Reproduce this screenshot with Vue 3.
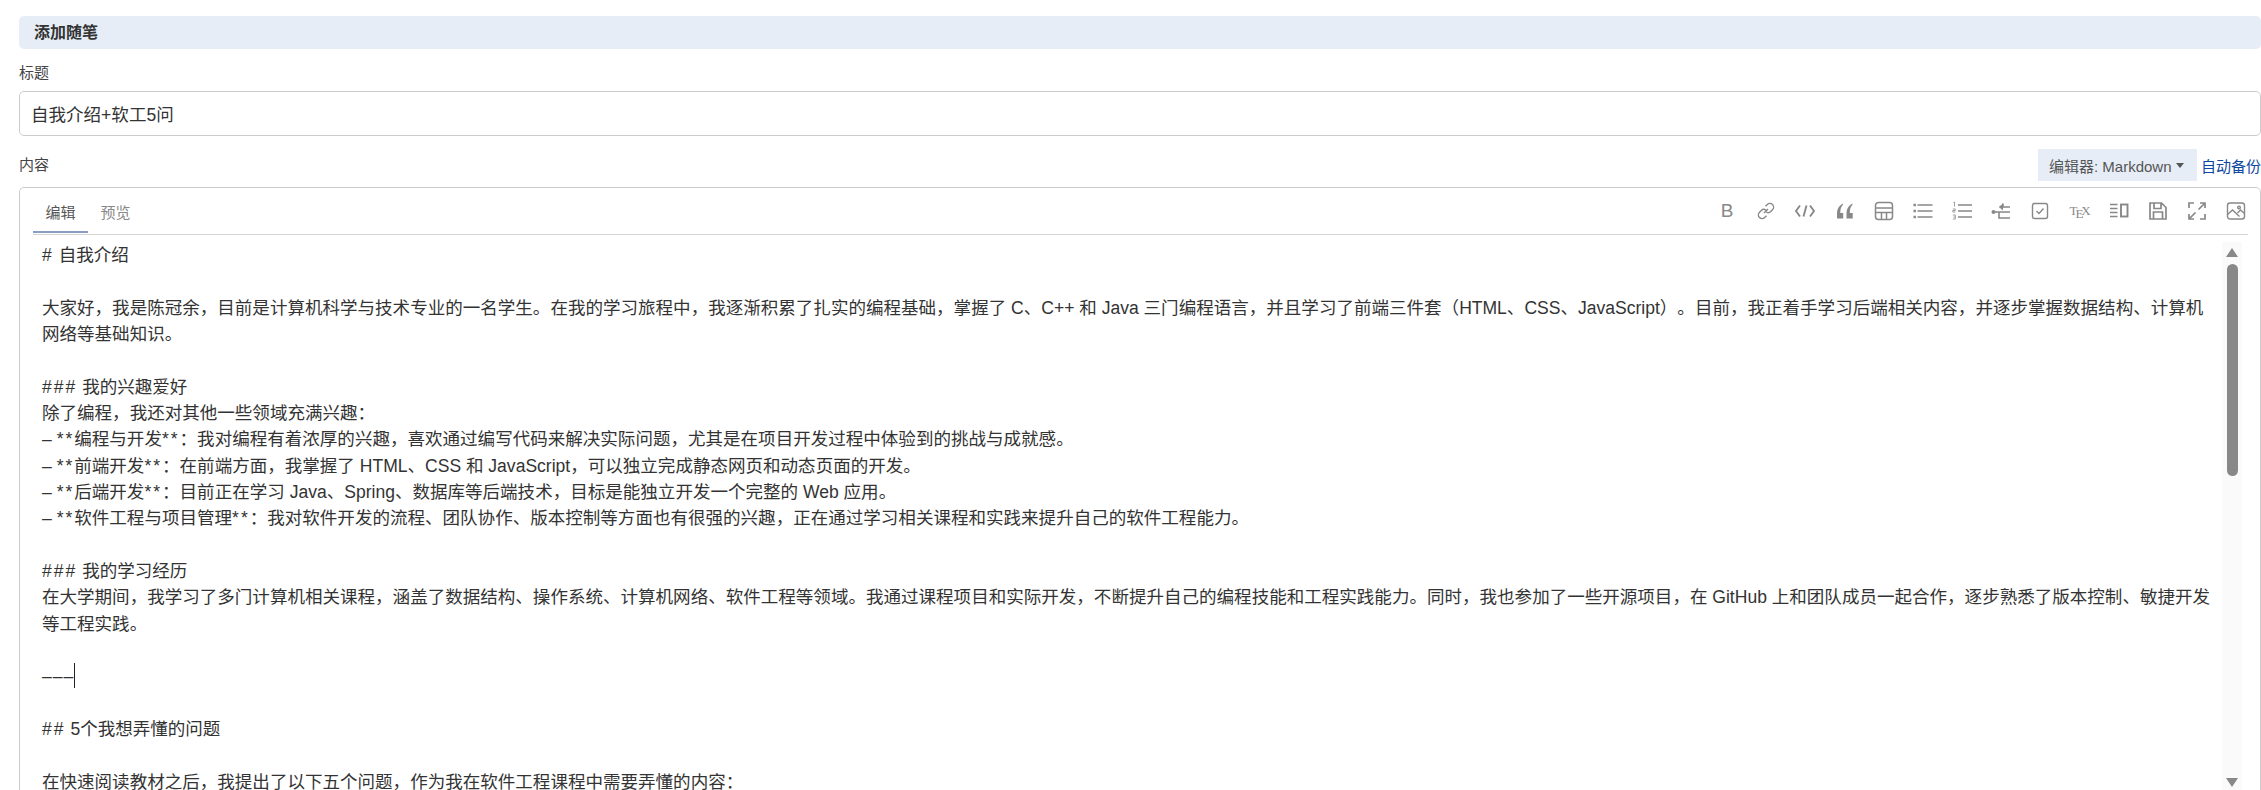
<template>
    <div class="page">
        <h2 class="section-title">添加随笔</h2>

        <label class="field-label title-label">标题</label>
        <input class="title-input" type="text" value="自我介绍+软工5问" />

        <div class="content-head">
            <label class="field-label">内容</label>
            <div class="content-actions">
                <span class="editor-switch">编辑器: Markdown<i class="caret"></i></span>
                <a class="backup-link">自动备份</a>
            </div>
        </div>

        <div class="editor">
            <div class="editor-top">
                <div class="tabs">
                    <span class="tab tab-active">编辑</span>
                    <span class="tab">预览</span>
                </div>
                <div class="toolbar">
                    <span class="tool tool-bold">B</span>
                    <svg class="tool-icon" viewBox="0 0 20 20"><path d="M8 12l4-4M9.500 5.300l1.800-1.800a3.400 3.400 0 0 1 5.200 5.200l-1.800 1.800a3.400 3.400 0 0 1-4.800 0M10.500 14.700l-1.800 1.800a3.400 3.400 0 0 1-5.200-5.200l1.800-1.800a3.400 3.400 0 0 1 4.800 0" /></svg>
                    <svg class="tool-icon" viewBox="0 0 20 20"><path d="M5 4.500L1 10l4 5.500M15 4.500l4 5.500-4 5.500M11.500 4.500L8.500 15.500" stroke-width="1.900" /></svg>
                    <svg class="tool-icon" viewBox="0 0 20 20"><path class="solid" d="M2 17.500v-5.500C2 8 4 4.500 8 2.500v1.200C6.200 5.500 5.300 8 5.300 12h2.900v5.500zM11.500 17.500v-5.500c0-4 2-7.500 6-9.500v1.200c-1.800 1.800-2.700 4.300-2.700 8.300h2.900v5.500z" /></svg>
                    <svg class="tool-icon" viewBox="0 0 20 20"><path d="M4.500 1.500h11a3 3 0 0 1 3 3v11a3 3 0 0 1-3 3h-11a3 3 0 0 1-3-3v-11a3 3 0 0 1 3-3zM1.500 7h17M1.500 11.500h17M7.500 11.500v7M12.500 11.500v7" stroke-width="1.500" /></svg>
                    <svg class="tool-icon" viewBox="0 0 20 20"><path d="M4.500 4h15M4.500 10h15M4.500 16h15" stroke-width="1.700" /><path class="solid" d="M.500 2.800h2.400v2.400h-2.400zM.500 8.800h2.400v2.400h-2.400zM.500 14.800h2.400v2.400h-2.400z" /></svg>
                    <svg class="tool-icon" viewBox="0 0 20 20"><path d="M6 4h14M6 10h14M6 16h14" stroke-width="1.700" /><path d="M1.500 1.500l1-.5v4.500M.8 8h2.500v1.500h-2.500v1.500h2.500M.8 14h2.500v4h-2.500M1.500 16h1.800" stroke-width=".8" /></svg>
                    <svg class="tool-icon" viewBox="0 0 20 20"><path d="M12 2.500v3.500M8.500 6h10.500M2 11h17M8 11v6h11" stroke-width="1.600" /><path class="solid" d="M8 6l4-3.500v7z" /><circle class="solid" cx="2.500" cy="11" r="2" /></svg>
                    <svg class="tool-icon" viewBox="0 0 20 20"><rect x="2.500" y="2.500" width="15" height="15" rx="2" /><path d="M6.500 10l2.500 2.500 4.500-5" /></svg>
                    <span class="tool tool-tex">T<span class="tex-e">E</span>X</span>
                    <svg class="tool-icon" viewBox="0 0 20 20"><path d="M1 3.500h7.500M1 7.500h7.500M1 11.500h7.500M1 15.500h7.500" stroke-width="1.600" /><rect x="12" y="3.500" width="6.500" height="12" stroke-width="1.900" /></svg>
                    <svg class="tool-icon" viewBox="0 0 20 20"><path d="M2 2h11.500l4.500 4.500V18H2zM6 2v5.500h7V2M5.500 18v-7h9v7" stroke-width="1.700" /></svg>
                    <svg class="tool-icon" viewBox="0 0 20 20"><path d="M2 7V2h5M13 2h5v5M2 13v5h5M18 13v5h-5M11.500 8.500L17 3M3 17l5.500-5.500" stroke-width="1.700" /></svg>
                    <svg class="tool-icon" viewBox="0 0 20 20"><rect x="1.500" y="2" width="17" height="16" rx="2.500" /><path d="M1.500 13.500l5-4.500 7 6.500M11.500 12l3-3 4 3.500" /><circle cx="13" cy="6.500" r="1.300" /></svg>
                </div>
            </div>

            <div class="editor-body">
                <div class="code">
                    <div v-for="(line, i) in lines" :key="i" class="code-line" :class="{ 'code-rule': i === cursorLine }">
                        <template v-for="(part, j) in splitMarks(line)" :key="j"><span v-if="isMark(part)" class="mark">{{ part }}</span><template v-else>{{ part }}</template></template><br v-if="!line" /><span v-if="i === cursorLine" class="cursor"></span>
                    </div>
                </div>
                <div class="scrollbar">
                    <i class="arrow-up"></i>
                    <i class="thumb"></i>
                    <i class="arrow-down"></i>
                </div>
            </div>
        </div>
    </div>
</template>

<script setup>
const cursorLine = 14;

const lines = [
    '# 自我介绍',
    '',
    '大家好，我是陈冠余，目前是计算机科学与技术专业的一名学生。在我的学习旅程中，我逐渐积累了扎实的编程基础，掌握了 C、C++ 和 Java 三门编程语言，并且学习了前端三件套（HTML、CSS、JavaScript）。目前，我正着手学习后端相关内容，并逐步掌握数据结构、计算机网络等基础知识。',
    '',
    '### 我的兴趣爱好',
    '除了编程，我还对其他一些领域充满兴趣：',
    '– **编程与开发**：我对编程有着浓厚的兴趣，喜欢通过编写代码来解决实际问题，尤其是在项目开发过程中体验到的挑战与成就感。',
    '– **前端开发**：在前端方面，我掌握了 HTML、CSS 和 JavaScript，可以独立完成静态网页和动态页面的开发。',
    '– **后端开发**：目前正在学习 Java、Spring、数据库等后端技术，目标是能独立开发一个完整的 Web 应用。',
    '– **软件工程与项目管理**：我对软件开发的流程、团队协作、版本控制等方面也有很强的兴趣，正在通过学习相关课程和实践来提升自己的软件工程能力。',
    '',
    '### 我的学习经历',
    '在大学期间，我学习了多门计算机相关课程，涵盖了数据结构、操作系统、计算机网络、软件工程等领域。我通过课程项目和实际开发，不断提升自己的编程技能和工程实践能力。同时，我也参加了一些开源项目，在 GitHub 上和团队成员一起合作，逐步熟悉了版本控制、敏捷开发等工程实践。',
    '',
    '–––',
    '',
    '## 5个我想弄懂的问题',
    '',
    '在快速阅读教材之后，我提出了以下五个问题，作为我在软件工程课程中需要弄懂的内容：',
];

function splitMarks(line) {
    return line.split(/(\*+|#+)/).filter(Boolean);
}

function isMark(part) {
    return /^[*#]+$/.test(part);
}
</script>

<style>
body {
    overflow: hidden;
    background: #ffffff;
}
</style>

<style scoped>
.page {
    box-sizing: border-box;
    width: 2261px;
    height: 790px;
    padding: 16px 0 0 19px;
    overflow: hidden;
    font-family: "Liberation Sans", "Noto Sans CJK SC", sans-serif;
    color: #333333;
    text-spacing-trim: space-all;
}

.section-title {
    height: 33px;
    margin: 0;
    padding: 0 0 0 15px;
    background: #e6edf6;
    border-radius: 5px;
    font-size: 16px;
    font-weight: 700;
    line-height: 33px;
    color: #333333;
}

.field-label {
    font-size: 15px;
    line-height: 22px;
    color: #444444;
}

.title-label {
    display: block;
    margin-top: 13px;
    margin-bottom: 7px;
}

.title-input {
    display: block;
    box-sizing: border-box;
    width: 2242px;
    height: 45px;
    padding: 0 11px;
    border: 1px solid #cccccc;
    border-radius: 5px;
    outline: none;
    font-family: inherit;
    font-size: 17.55px;
    color: #333333;
}

.content-head {
    display: flex;
    justify-content: space-between;
    align-items: center;
    height: 32px;
    margin-top: 13px;
    margin-bottom: 6px;
}

.content-actions {
    display: flex;
    align-items: center;
    gap: 4px;
}

.editor-switch {
    box-sizing: border-box;
    display: flex;
    align-items: center;
    width: 159px;
    height: 32px;
    padding-left: 11px;
    background: #e6edf6;
    font-size: 15px;
    color: #555555;
}

.caret {
    margin-left: 4px;
    border-top: 5px solid #555555;
    border-left: 4px solid transparent;
    border-right: 4px solid transparent;
}

.backup-link {
    width: 60px;
    font-size: 15px;
    white-space: nowrap;
    color: #0d47a1;
}

.editor {
    box-sizing: border-box;
    width: 2242px;
    height: 640px;
    padding: 0 12px 0 13px;
    border: 1px solid #cccccc;
    border-radius: 5px;
}

.editor-top {
    display: flex;
    justify-content: space-between;
    align-items: center;
    height: 46px;
    border-bottom: 1px solid #d5d5d5;
}

.tabs {
    display: flex;
    align-self: flex-start;
}

.tab {
    box-sizing: border-box;
    width: 55px;
    height: 45px;
    padding-top: 8px;
    font-size: 15px;
    line-height: 34px;
    text-align: center;
    color: #888888;
}

.tab-active {
    border-bottom: 2px solid #8b9dc3;
    color: #555555;
}

.toolbar {
    display: flex;
    align-items: center;
    gap: 19.15px;
    padding-right: 2px;
}

.tool-icon {
    width: 20px;
    height: 20px;
    fill: none;
    stroke: #888888;
    stroke-width: 1.4;
}

.tool-icon .solid {
    fill: #888888;
    stroke: none;
}

.tool {
    width: 20px;
    text-align: center;
    color: #888888;
}

.tool-bold {
    font-size: 19px;
    line-height: 20px;
}

.tool-tex {
    font-family: "Liberation Serif", serif;
    font-size: 13px;
    line-height: 20px;
    white-space: nowrap;
}

.tex-e {
    position: relative;
    top: 3px;
    margin: 0 -2px;
}

.editor-body {
    display: flex;
    padding-top: 7px;
}

.code {
    box-sizing: border-box;
    width: 2188px;
    padding: 0 6px 0 9px;
    font-size: 17.55px;
    line-height: 26.33px;
    color: #333333;
}

.code-line {
    white-space: pre-wrap;
    word-break: break-all;
}

.code-rule {
    letter-spacing: 1px;
}

.mark {
    letter-spacing: 2px;
}

.cursor {
    display: inline-block;
    width: 1px;
    height: 25px;
    margin-bottom: -6px;
    background: #222222;
}

.scrollbar {
    display: flex;
    flex-direction: column;
    align-items: center;
    width: 20px;
    height: 548px;
    margin-left: 1px;
    background: #fafafa;
}

.arrow-up,
.arrow-down {
    border-left: 6px solid transparent;
    border-right: 6px solid transparent;
}

.arrow-up {
    margin-top: 6px;
    border-bottom: 9px solid #888888;
}

.arrow-down {
    margin-top: auto;
    margin-bottom: 3px;
    border-top: 9px solid #888888;
}

.thumb {
    width: 11px;
    height: 212px;
    margin-top: 7px;
    background: #888888;
    border-radius: 6px;
}
</style>
